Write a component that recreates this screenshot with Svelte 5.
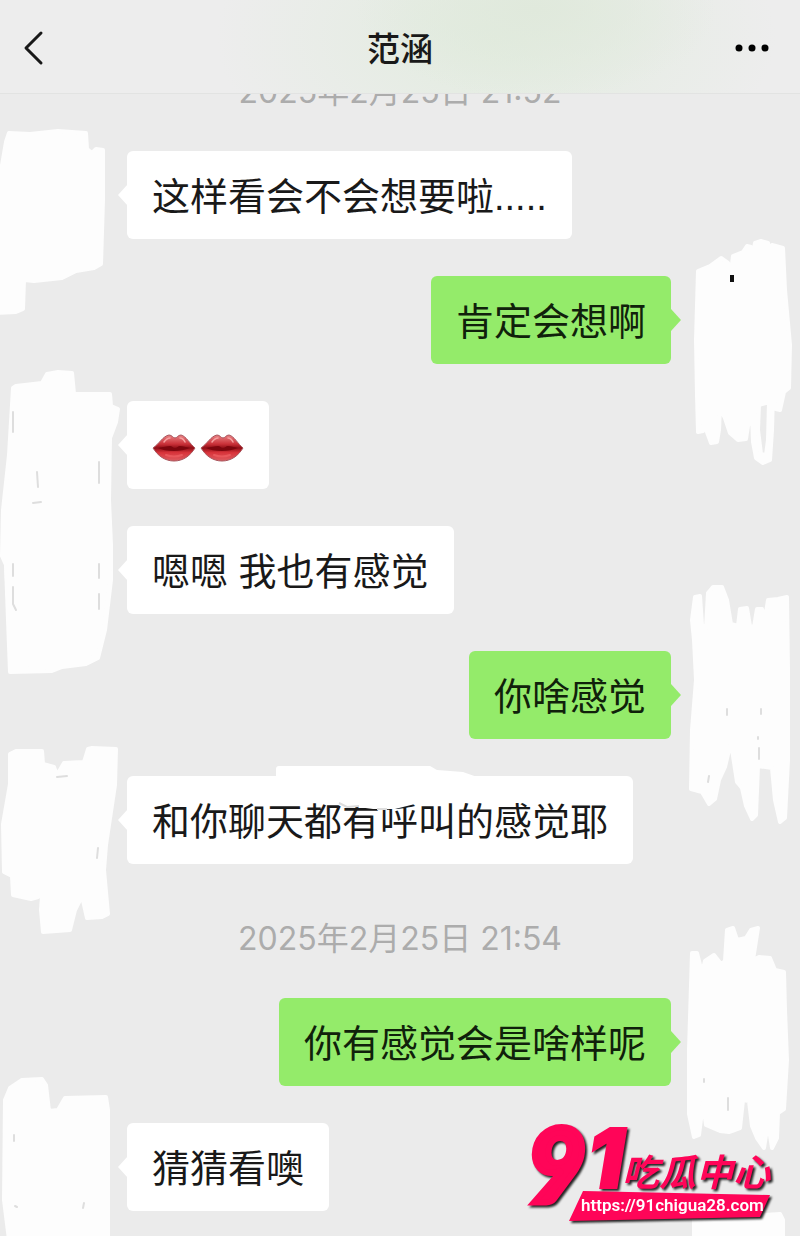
<script lang="ts">
  type Item = {
    kind: 'time' | 'in' | 'out';
    text?: string;
    lips?: number;
    smudge?: boolean;
    top?: number;
    cover?: string;
    marks?: string;
    dark?: boolean;
  };

  const title = '范涵';

  // cover = painted-over avatar, marks = what still shows through it
  const ITEMS: Item[] = [
    { kind: 'time', text: '2025年2月25日 21:52' },
    {
      kind: 'in',
      text: '这样看会不会想要啦.....',
      top: 151,
      cover: 'M6 142L9 133L30 134L58 131L86 133L87 149L92 153L96 149L103 150L103 200L101 264L94 268L76 271L62 278L34 281L24 280L23 309L16 312L-4 313L-4 200Z'
    },
    {
      kind: 'out',
      text: '肯定会想啊',
      top: 276,
      dark: true,
      cover: 'M27 271L39 266L50 258L57 263L60 272L62 256L72 252L76 246L80 247L82 255L84 243L90 241L97 243L99 253L101 245L112 248L114 290L119 345L118 388L113 392L109 410L105 409L102 395L101 430L99 460L92 463L85 458L82 442L81 415L77 426L75 439L67 440L59 433L54 418L49 408L48 430L46 442L40 443L36 432L34 412L32 431L27 432L26 395L25 340ZM88 405L87 430L90 454L95 455L97 440L98 402Z',
      marks: 'M61 275V282'
    },
    {
      kind: 'in',
      lips: 2,
      top: 401,
      cover: 'M13 388L16 386L42 383L47 374L58 372L72 373L74 394L110 394L111 406L118 409L116 422L110 438L109 500L111 545L111 580L105 630L98 658L86 664L62 667L52 671L10 672L8 620L6 565L2 556L3 510L9 455Z',
      marks: 'M13 412V432M37 472L38 487M33 503L41 502M99 462V483M98 530V532'
    },
    {
      kind: 'in',
      text: '嗯嗯 我也有感觉',
      top: 526,
      cover: 'M4 530L107 530L110 582L104 630L98 656L62 666L12 670L8 600Z',
      marks: 'M13 564V576M13 587V604L16 610M99 564V578M99 594V609'
    },
    {
      kind: 'out',
      text: '你啥感觉',
      top: 651,
      cover: 'M24 597L29 596L31 625L35 628L37 593L42 587L51 587L56 600L60 624L67 626L69 609L76 608L79 626L83 627L86 609L91 609L94 619L97 600L107 599L116 597L117 670L117 760L114 818L109 822L104 800L101 768L87 766L85 815L81 819L75 806L71 788L66 782L62 756L60 742L54 767L48 780L44 799L38 804L31 792L20 789L21 730L25 680L23 640L21 620Z',
      marks: 'M56 709V715M90 709V714M87 737V739M88 748V759M38 776L37 782'
    },
    {
      kind: 'in',
      text: '和你聊天都有呼叫的感觉耶',
      smudge: true,
      top: 776,
      cover: 'M10 754L16 751L42 751L43 764L54 767L57 775L64 763L84 762L88 749L92 748L116 749L115 785L106 845L104 870L108 914L102 917L87 918L82 896L75 910L70 930L43 932L41 910L43 882L38 897L31 899L13 895L12 876L4 872L3 824L10 784Z',
      marks: 'M57 777L67 776M98 848L97 858'
    },
    { kind: 'time', text: '2025年2月25日 21:54' },
    {
      kind: 'out',
      text: '你有感觉会是啥样呢',
      top: 998,
      cover: 'M21 953L26 953L31 973L34 961L43 955L50 964L54 961L56 930L62 928L66 940L75 938L80 930L87 928L82 960L88 957L99 958L104 970L113 972L114 1010L116 1060L113 1109L107 1113L106 1138L101 1148L97 1123L93 1148L86 1138L81 1126L78 1101L72 1100L69 1128L58 1132L49 1131L35 1125L32 1103L28 1135L23 1137L18 1114L18 1050Z',
      marks: 'M33 1079V1082M57 1098V1110'
    },
    {
      kind: 'in',
      text: '猜猜看噢',
      top: 1123,
      cover: 'M5 1100L10 1088L22 1080L42 1079L46 1085L49 1111L58 1110L65 1098L106 1097L108 1110L108 1240L9 1240L4 1200Z',
      marks: 'M14 1135V1141M15 1206L17 1207M84 1203L83 1208'
    }
  ];
</script>

{#snippet mouth()}
  <svg class="mouth" viewBox="0 0 44 30" aria-hidden="true">
    <defs>
      <linearGradient id="lip" x1="0" y1="0" x2="0" y2="1">
        <stop offset="0" stop-color="#ea8486" />
        <stop offset="0.35" stop-color="#c93038" />
        <stop offset="0.5" stop-color="#8f0f17" />
        <stop offset="0.68" stop-color="#d9343b" />
        <stop offset="1" stop-color="#dc5c61" />
      </linearGradient>
    </defs>
    <path d="M1 16C7 12 11 4 17 3C20 3 21 6 23 6C25 6 26 3 29 3C34 4 38 12 43 16C38 24 31 29 22 29C13 29 6 24 1 16Z" fill="url(#lip)" stroke="#a8555c" stroke-width="1" />
    <path d="M6 16C11 15 15 14 18 14C20 14 21 16 23 16C25 16 26 14 28 14C31 14 34 15 38 16C33 18 28 19 22 19C15 19 10 18 6 16Z" fill="#7c060e" />
    <path d="M12 10Q15 6 18 6M28 6Q31 6 33 10" fill="none" stroke="#f5a0a0" stroke-width="1.5" stroke-linecap="round" />
    <path d="M14 23Q22 26 30 23" fill="none" stroke="#e9585c" stroke-width="2" stroke-linecap="round" />
  </svg>
{/snippet}

<div class="phone">
  <header class="topbar">
    <button type="button" class="icon-btn" aria-label="返回">
      <svg width="24" height="36" viewBox="0 0 24 36" aria-hidden="true">
        <path d="M20 3L5 18L20 33" fill="none" stroke="#181818" stroke-width="3" stroke-linecap="round" stroke-linejoin="round" />
      </svg>
    </button>
    <h1>{title}</h1>
    <button type="button" class="icon-btn" aria-label="更多">
      <svg width="36" height="12" viewBox="0 0 36 12" aria-hidden="true">
        <circle cx="5" cy="6" r="3.5" />
        <circle cx="18" cy="6" r="3.5" />
        <circle cx="31" cy="6" r="3.5" />
      </svg>
    </button>
  </header>

  <main class="chat">
    {#each ITEMS as item}
      {#if item.kind === 'time'}
        <time class="stamp">{item.text}</time>
      {:else}
        <div class="row {item.kind}">
          <svg class="avatar" viewBox="0 {item.top} 128 88" aria-hidden="true">
            <path class="cover" d={item.cover} />
            {#if item.marks}
              <path class="marks" class:dark={item.dark} d={item.marks} />
            {/if}
          </svg>
          <div class="bubble">
            {#if item.lips}
              <span class="lips" role="img" aria-label="嘴唇">
                {#each Array(item.lips) as _}
                  {@render mouth()}
                {/each}
              </span>
            {:else}
              {item.text}
            {/if}
            {#if item.smudge}
              <svg class="smudge" viewBox="0 0 505 88" aria-hidden="true">
                <path d="M149 2V-7Q149 -10 152 -10H303L310 -6L336 -4L353 2L340 24L288 28L268 33L246 33L216 29L200 20Z" fill="#fff" />
                <path d="M212 27L220 31L232 30M250 33H260" fill="none" stroke="#ddd" stroke-width="2" />
              </svg>
            {/if}
          </div>
        </div>
      {/if}
    {/each}
  </main>

  <svg class="last-avatar" viewBox="0 0 110 24" aria-hidden="true">
    <path class="cover" d="M4 4L10 6L16 3L24 6L40 4L62 6L74 3L90 2L93 8L93 30L4 30Z" />
  </svg>

  <a class="watermark" href="https://91chigua28.com">
    <svg width="256" height="108" viewBox="0 0 256 108">
      <text class="nine" x="2" y="83">9</text>
      <text class="one" x="62" y="68">1</text>
      <text class="brand" x="97" y="66">吃瓜中心</text>
      <path class="ribbon" d="M58 71L245 75L235 97L44 101Z" />
      <text class="url" x="56" y="91">https://91chigua28.com</text>
    </svg>
  </a>
</div>

<style>
  :global(body) {
    background: #ebebeb;
  }

  .phone {
    position: relative;
    min-height: 100vh;
    overflow: hidden;
    background: #ebebeb;
    color: #191919;
    font-family: "Liberation Sans", "Noto Sans CJK SC", sans-serif;
  }

  .topbar {
    position: absolute;
    inset: 0 0 auto;
    z-index: 2;
    box-sizing: border-box;
    height: 94px;
    padding: 2px 24px 0;
    display: flex;
    align-items: center;
    justify-content: space-between;
    border-bottom: 1px solid #e2e3e2;
    background:
      radial-gradient(ellipse 180px 90px at 67% 10%, #e0e9dc, transparent),
      radial-gradient(ellipse 280px 160px at 62% 40%, #e2ecdf, transparent),
      #ededed;
  }

  h1 {
    margin: 0;
    padding-top: 4px;
    font-size: 33px;
    font-weight: 500;
    line-height: 48px;
  }

  .icon-btn {
    width: 48px;
    height: 48px;
    padding: 0;
    border: none;
    background: none;
    display: flex;
    align-items: center;
    cursor: pointer;
  }

  .icon-btn:first-child svg {
    margin-left: -3px;
  }

  .icon-btn:last-child {
    justify-content: flex-end;
    padding-right: 6px;
  }

  .icon-btn:last-child svg {
    flex: none;
  }

  .chat {
    display: flex;
    flex-direction: column;
    gap: 37px;
    padding: 54px 0 25px;
  }

  .stamp {
    margin: 20px 0 4px;
    font-family: Inter, "Noto Sans CJK SC", sans-serif;
    font-size: 32px;
    font-weight: 400;
    line-height: 36px;
    text-align: center;
    color: #acacac;
  }

  .row {
    position: relative;
    display: flex;
    padding: 0 129px 0 127px;
  }

  .row.out {
    justify-content: flex-end;
  }

  .avatar {
    position: absolute;
    top: 0;
    left: 0;
    width: 128px;
    height: 88px;
    overflow: visible;
  }

  .out .avatar {
    left: auto;
    right: 1px;
  }

  .cover {
    fill: #fdfdfd;
    stroke: #fdfdfd;
    stroke-width: 4;
    stroke-linejoin: round;
  }

  .marks {
    fill: none;
    stroke: #dedede;
    stroke-width: 2;
    stroke-linecap: round;
  }

  .marks.dark {
    stroke: #111;
    stroke-width: 4;
    stroke-linecap: butt;
  }

  .bubble {
    position: relative;
    display: flex;
    align-items: center;
    min-height: 88px;
    box-sizing: border-box;
    padding: 18px 25px 14px;
    border-radius: 6px;
    background: #fff;
    font-size: 38px;
    line-height: 56px;
  }

  .bubble::before {
    content: "";
    position: absolute;
    top: 33px;
    left: -9px;
    width: 10px;
    height: 22px;
    background: inherit;
    clip-path: polygon(0 50%, 100% 0, 100% 100%);
  }

  .out .bubble {
    background: #94eb6a;
    color: #10210b;
  }

  .out .bubble::before {
    left: auto;
    right: -10px;
    clip-path: polygon(100% 50%, 0 0, 0 100%);
  }

  .lips {
    display: flex;
    gap: 4px;
  }

  .mouth {
    width: 44px;
    height: 30px;
  }

  .smudge {
    position: absolute;
    top: 0;
    left: 0;
    width: 505px;
    height: 88px;
    overflow: visible;
  }

  .last-avatar {
    position: absolute;
    right: 0;
    bottom: 0;
    width: 110px;
    height: 24px;
  }

  .watermark {
    position: absolute;
    right: 19px;
    bottom: 8px;
    z-index: 1;
  }

  .watermark svg {
    display: block;
    overflow: visible;
    filter: drop-shadow(2px 2px 1px #222);
  }

  .nine,
  .one,
  .brand,
  .ribbon {
    fill: #ff0558;
  }

  .nine {
    font-family: Lato, sans-serif;
    font-size: 102px;
    font-style: italic;
    font-weight: 900;
    stroke: #ff0558;
    stroke-width: 6;
  }

  .one {
    font-family: Inter, sans-serif;
    font-size: 82px;
    font-style: italic;
    font-weight: 900;
    stroke: #ff0558;
    stroke-width: 2;
  }

  .brand {
    font-family: "Noto Sans CJK SC", sans-serif;
    font-size: 37px;
    font-style: italic;
    font-weight: 700;
  }

  .url {
    fill: #fff;
    font-family: Roboto, sans-serif;
    font-size: 17px;
    font-weight: 600;
  }
</style>
